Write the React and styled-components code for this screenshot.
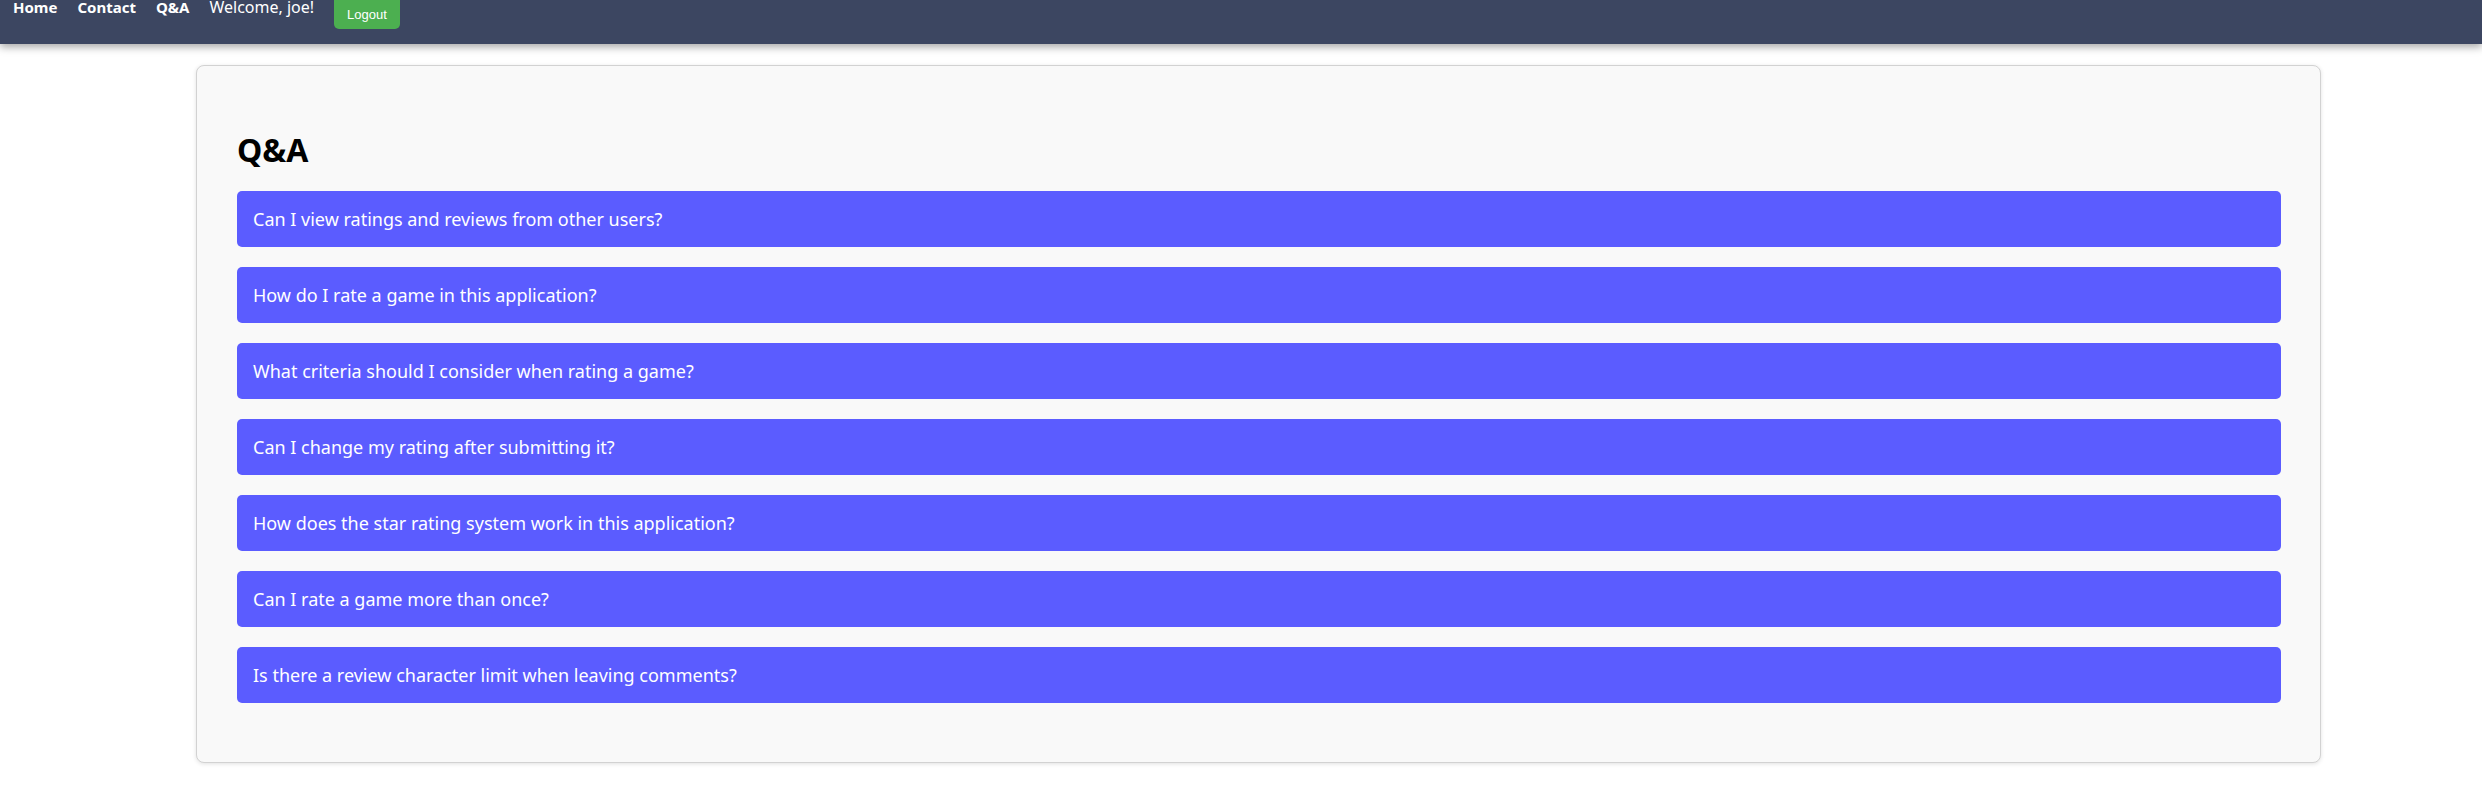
import React from "react";
import styled, { createGlobalStyle } from "styled-components";

const GlobalStyle = createGlobalStyle`
  body {
    margin: 0;
    background: #fff;
    font-family: "Noto Sans", "Open Sans", sans-serif;
  }
`;

const Navbar = styled.nav`
  height: 44px;
  background-color: #3c4661;
  box-shadow: 0 3px 8px rgba(0, 0, 0, 0.35);
  display: flex;
  align-items: flex-start;
  gap: 20px;
  padding-left: 13px;
  position: relative;
  z-index: 2;
`;

const NavLink = styled.a`
  color: #fff;
  font-size: 15px;
  font-weight: 700;
  line-height: 20px;
  margin-top: -3px;
  text-decoration: none;
`;

const Welcome = styled.span`
  color: #fff;
  font-size: 16px;
  line-height: 20px;
  margin-top: -3px;
`;

const LogoutButton = styled.button`
  height: 29px;
  padding: 0 13px;
  border: none;
  border-radius: 0 0 5px 5px;
  background: #4caf50;
  color: #fff;
  font-family: "Liberation Sans", Arial, sans-serif;
  font-size: 13px;
`;

const Page = styled.main`
  padding: 21px 0 40px 196px;
`;

const Card = styled.section`
  width: 2044px;
  padding: 64px 39px 59px 40px;
  background: #f9f9f9;
  border: 1px solid #d2d2d2;
  border-radius: 8px;
  box-shadow: 0 1px 4px rgba(0, 0, 0, 0.12);
`;

const Title = styled.h2`
  margin: 0 0 21px 0;
  font-size: 32px;
  line-height: 40px;
  font-weight: 700;
  color: #000;
`;

const List = styled.div`
  display: flex;
  flex-direction: column;
  gap: 20px;
`;

const Question = styled.button`
  height: 56px;
  width: 100%;
  padding: 0 16px;
  display: flex;
  align-items: center;
  border: none;
  border-radius: 5px;
  background: #5b5cff;
  color: #fff;
  font-family: "Noto Sans", "Open Sans", sans-serif;
  font-size: 18px;
  text-align: left;
  cursor: pointer;
`;

const questions = [
  "Can I view ratings and reviews from other users?",
  "How do I rate a game in this application?",
  "What criteria should I consider when rating a game?",
  "Can I change my rating after submitting it?",
  "How does the star rating system work in this application?",
  "Can I rate a game more than once?",
  "Is there a review character limit when leaving comments?",
];

const App = () => (
  <>
    <GlobalStyle />
    <Navbar>
      <NavLink href="#">Home</NavLink>
      <NavLink href="#">Contact</NavLink>
      <NavLink href="#">Q&amp;A</NavLink>
      <Welcome>Welcome, joe!</Welcome>
      <LogoutButton>Logout</LogoutButton>
    </Navbar>
    <Page>
      <Card>
        <Title>Q&amp;A</Title>
        <List>
          {questions.map((q) => (
            <Question key={q}>{q}</Question>
          ))}
        </List>
      </Card>
    </Page>
  </>
);

export default App;
